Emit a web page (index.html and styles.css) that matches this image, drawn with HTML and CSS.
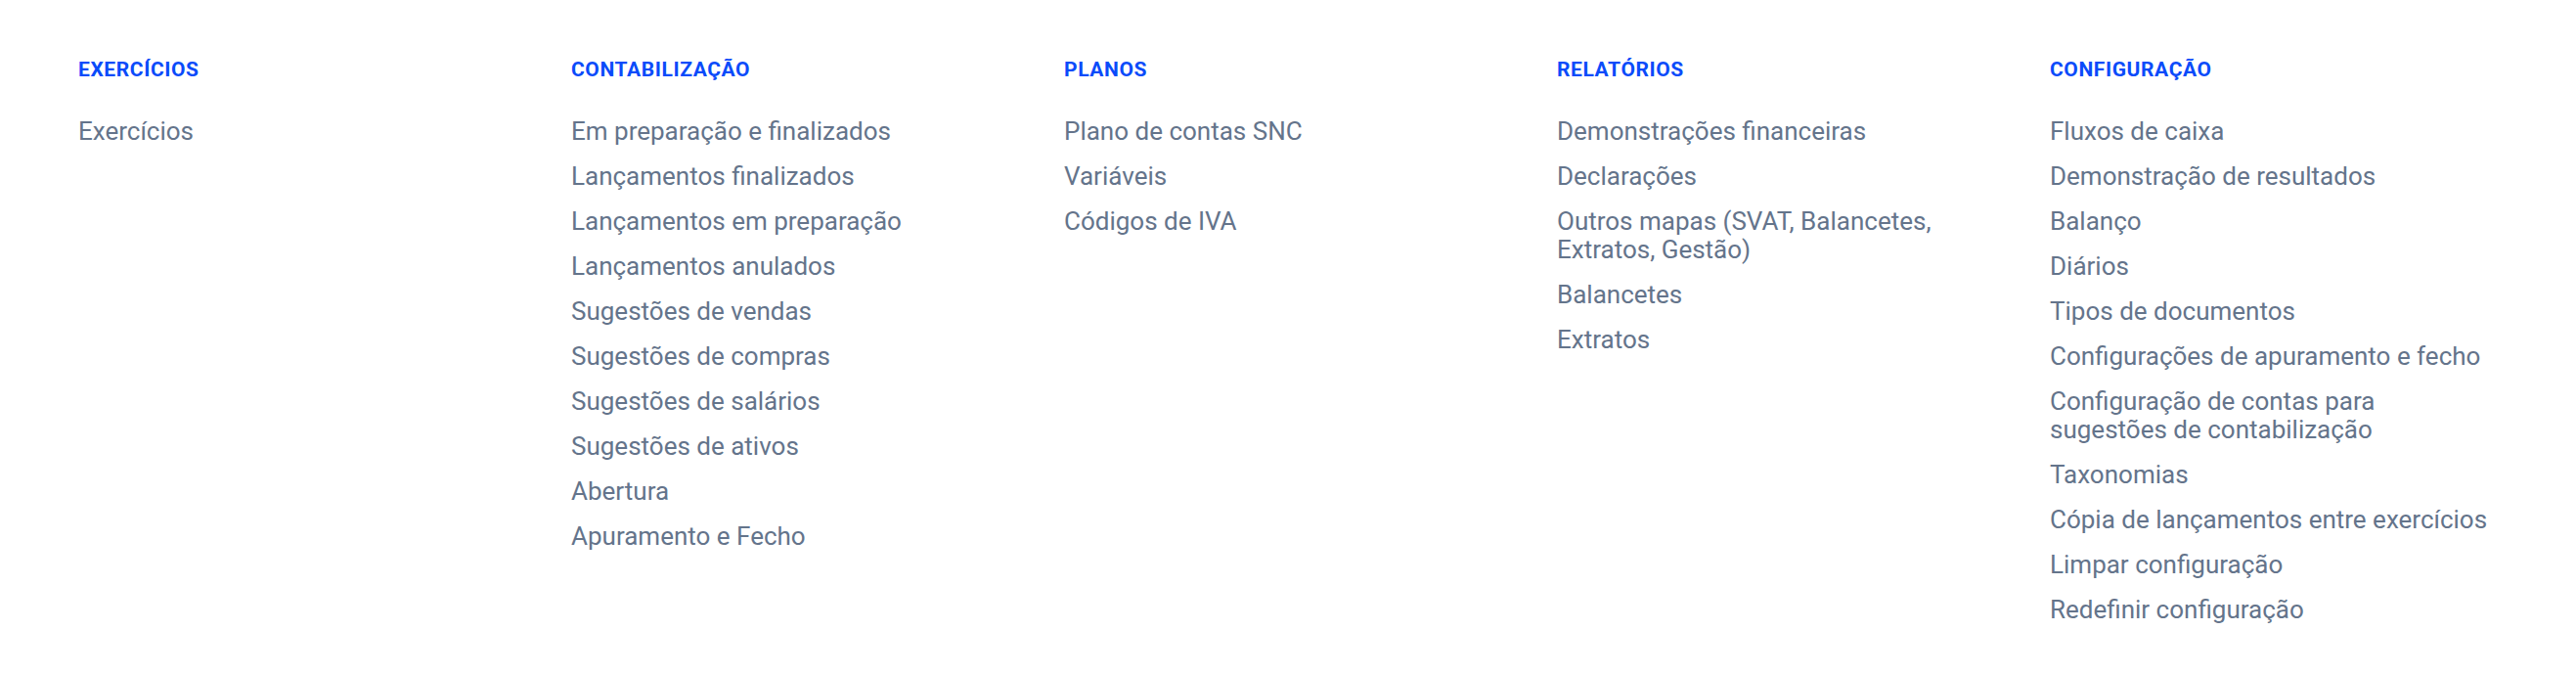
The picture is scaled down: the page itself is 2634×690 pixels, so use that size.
FILE: index.html
```html
<!DOCTYPE html>
<html lang="pt">
<head>
<meta charset="utf-8">
<title>Menu</title>
<link rel="stylesheet" href="styles.css">
</head>
<body>
<nav class="mega">
  <section class="col">
    <h2 class="col-title">Exercícios</h2>
    <ul class="links">
      <li>Exercícios</li>
    </ul>
  </section>
  <section class="col">
    <h2 class="col-title">Contabilização</h2>
    <ul class="links">
      <li>Em preparação e finalizados</li>
      <li>Lançamentos finalizados</li>
      <li>Lançamentos em preparação</li>
      <li>Lançamentos anulados</li>
      <li>Sugestões de vendas</li>
      <li>Sugestões de compras</li>
      <li>Sugestões de salários</li>
      <li>Sugestões de ativos</li>
      <li>Abertura</li>
      <li>Apuramento e Fecho</li>
    </ul>
  </section>
  <section class="col">
    <h2 class="col-title">Planos</h2>
    <ul class="links">
      <li>Plano de contas SNC</li>
      <li>Variáveis</li>
      <li>Códigos de IVA</li>
    </ul>
  </section>
  <section class="col">
    <h2 class="col-title">Relatórios</h2>
    <ul class="links">
      <li>Demonstrações financeiras</li>
      <li>Declarações</li>
      <li>Outros mapas (SVAT, Balancetes, Extratos, Gestão)</li>
      <li>Balancetes</li>
      <li>Extratos</li>
    </ul>
  </section>
  <section class="col">
    <h2 class="col-title">Configuração</h2>
    <ul class="links">
      <li>Fluxos de caixa</li>
      <li>Demonstração de resultados</li>
      <li>Balanço</li>
      <li>Diários</li>
      <li>Tipos de documentos</li>
      <li>Configurações de apuramento e fecho</li>
      <li>Configuração de contas para sugestões de contabilização</li>
      <li>Taxonomias</li>
      <li>Cópia de lançamentos entre exercícios</li>
      <li>Limpar configuração</li>
      <li>Redefinir configuração</li>
    </ul>
  </section>
</nav>
</body>
</html>
```
FILE: styles.css
```css
html, body {
  margin: 0;
  padding: 0;
  background: #ffffff;
}
body {
  font-family: Roboto, "Liberation Sans", Arial, sans-serif;
}
.mega {
  display: grid;
  grid-template-columns: repeat(5, 451px);
  column-gap: 53px;
  padding: 60px 0 0 80px;
  align-items: start;
}
.col-title {
  margin: 0 0 38px 0;
  font-size: 21px;
  line-height: 22px;
  font-weight: 700;
  text-transform: uppercase;
  letter-spacing: 0.6px;
  color: #0a4bfa;
}
.links {
  list-style: none;
  margin: 0;
  padding: 0;
  display: flex;
  flex-direction: column;
  gap: 17px;
}
.links li {
  font-size: 26px;
  line-height: 29px;
  color: #64748b;
}
```
